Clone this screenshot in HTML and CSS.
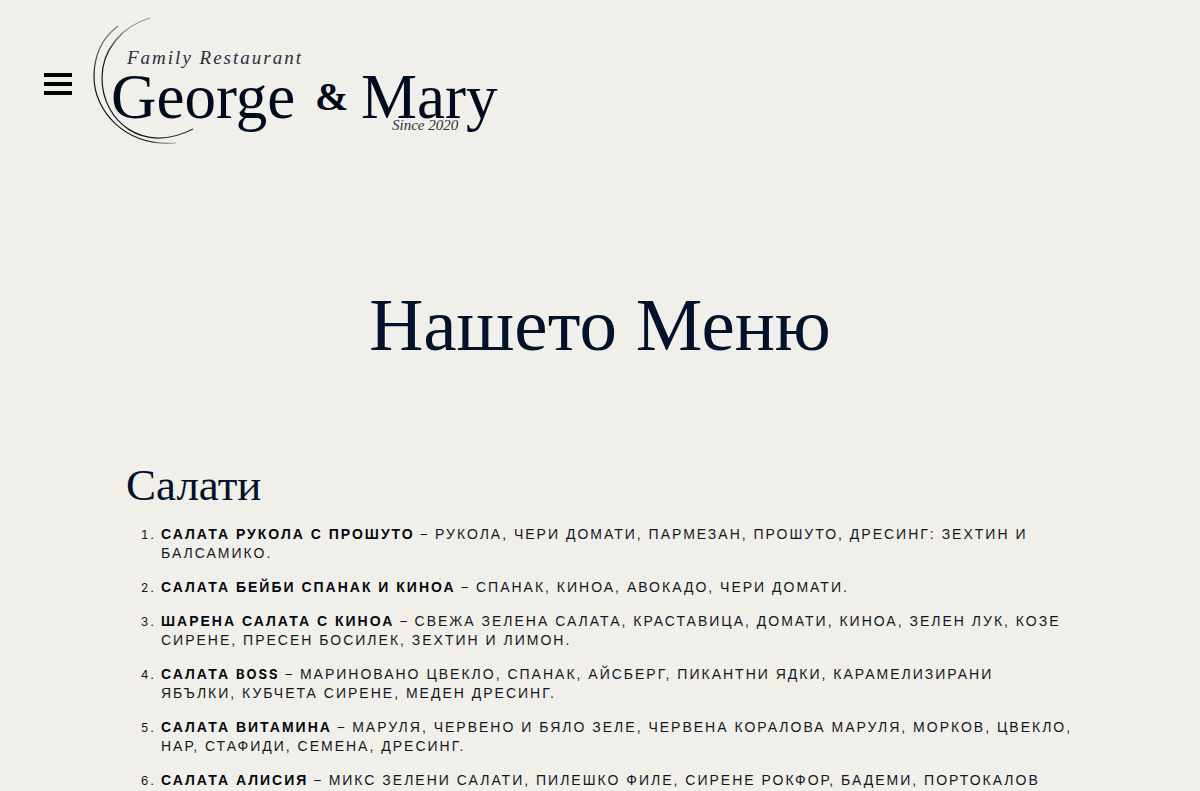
FILE: index.html
```html
<!DOCTYPE html>
<html lang="bg">
<head>
    <meta charset="UTF-8">
    <meta name="viewport" content="width=device-width, initial-scale=1.0">
    <title>George &amp; Mary</title>
    <link rel="stylesheet" href="styles.css">
</head>
<body>
    <!-- Header -->
    <header class="header">
        <button type="button" class="menu-button" aria-label="Меню">
            <span class="bar"></span>
            <span class="bar"></span>
            <span class="bar"></span>
        </button>
        <a href="#" class="logo">
            <svg width="440" height="136" viewBox="88 16 440 136">
                <defs>
                    <linearGradient id="fade-outer" gradientUnits="userSpaceOnUse" x1="94" y1="24" x2="176" y2="146">
                        <stop offset="0" stop-color="#12161f" stop-opacity="0.3"/>
                        <stop offset="0.3" stop-color="#12161f"/>
                        <stop offset="0.85" stop-color="#12161f"/>
                        <stop offset="1" stop-color="#12161f" stop-opacity="0.2"/>
                    </linearGradient>
                    <linearGradient id="fade-inner" gradientUnits="userSpaceOnUse" x1="160" y1="18" x2="194" y2="140">
                        <stop offset="0" stop-color="#12161f" stop-opacity="0.4"/>
                        <stop offset="0.15" stop-color="#12161f"/>
                        <stop offset="0.9" stop-color="#12161f"/>
                        <stop offset="1" stop-color="#12161f" stop-opacity="0.4"/>
                    </linearGradient>
                </defs>
                <path d="M118 26C102 38 94 56 94 77C94 110 124 147 176 143" fill="none" stroke="url(#fade-outer)" stroke-width="1.2"/>
                <path d="M150 18C122 26 102 50 102 78C102 121 143 155 193 129" fill="none" stroke="url(#fade-inner)" stroke-width="1.2"/>
                <text x="127" y="64" class="logo-tag">Family Restaurant</text>
                <text x="111" y="118" class="logo-name">George</text>
                <text x="315" y="110" class="logo-amp">&amp;</text>
                <text x="361" y="118" class="logo-name">Mary</text>
                <text x="392" y="130" class="logo-since">Since 2020</text>
            </svg>
        </a>
    </header>

    <!-- Menu -->
    <main class="container">
        <h1>Нашето Меню</h1>

        <section>
            <h2>Салати</h2>
            <ol class="menu-list">
                <li><strong>САЛАТА РУКОЛА С ПРОШУТО</strong> <span class="small">–</span> РУКОЛА, ЧЕРИ ДОМАТИ, ПАРМЕЗАН, ПРОШУТО, ДРЕСИНГ: ЗЕХТИН И БАЛСАМИКО.</li>
                <li><strong>САЛАТА БЕЙБИ СПАНАК И КИНОА</strong> <span class="small">–</span> СПАНАК, КИНОА, АВОКАДО, ЧЕРИ ДОМАТИ.</li>
                <li><strong>ШАРЕНА САЛАТА С КИНОА</strong> <span class="small">–</span> СВЕЖА ЗЕЛЕНА САЛАТА, КРАСТАВИЦА, ДОМАТИ, КИНОА, ЗЕЛЕН ЛУК, КОЗЕ СИРЕНЕ, ПРЕСЕН БОСИЛЕК, ЗЕХТИН И ЛИМОН.</li>
                <li><strong>САЛАТА <span class="small">BOSS</span></strong> <span class="small">–</span> МАРИНОВАНО ЦВЕКЛО, СПАНАК, АЙСБЕРГ, ПИКАНТНИ ЯДКИ, КАРАМЕЛИЗИРАНИ ЯБЪЛКИ, КУБЧЕТА СИРЕНЕ, МЕДЕН ДРЕСИНГ.</li>
                <li><strong>САЛАТА ВИТАМИНА</strong> <span class="small">–</span> МАРУЛЯ, ЧЕРВЕНО И БЯЛО ЗЕЛЕ, ЧЕРВЕНА КОРАЛОВА МАРУЛЯ, МОРКОВ, ЦВЕКЛО, НАР, СТАФИДИ, СЕМЕНА, ДРЕСИНГ.</li>
                <li><strong>САЛАТА АЛИСИЯ</strong> <span class="small">–</span> МИКС ЗЕЛЕНИ САЛАТИ, ПИЛЕШКО ФИЛЕ, СИРЕНЕ РОКФОР, БАДЕМИ, ПОРТОКАЛОВ</li>
            </ol>
        </section>
    </main>
</body>
</html>
```
FILE: styles.css
```css
* {
    box-sizing: border-box;
}

body {
    margin: 0;
    background-color: #f0efea;
    color: #14181c;
    font-family: "Liberation Sans", Arial, sans-serif;
    font-size: 14px;
    line-height: 19px;
}

/* Header */
.header {
    display: flex;
    align-items: center;
    gap: 16px;
    padding: 16px 44px 0;
}

.menu-button {
    display: flex;
    flex-direction: column;
    gap: 5px;
    width: 28px;
    padding: 0;
    border: none;
    background: none;
    cursor: pointer;
}

.bar {
    height: 4px;
    width: 100%;
    background-color: #000;
}

.logo svg {
    display: block;
}

.logo text {
    font-family: "Liberation Serif", "Times New Roman", serif;
    fill: #020a20;
}

.logo .logo-name {
    font-size: 63px;
}

.logo .logo-amp {
    font-size: 40px;
    font-weight: bold;
}

.logo .logo-tag {
    font-size: 19px;
    font-style: italic;
    letter-spacing: 2px;
    fill: #2a2f3a;
}

.logo .logo-since {
    font-size: 15px;
    font-style: italic;
    fill: #2a2f3a;
}

/* Menu */
.container {
    max-width: 1200px;
    margin: 0 auto;
    padding: 128px 126px 0;
}

h1,
h2 {
    font-family: "Liberation Serif", "Times New Roman", serif;
    font-weight: normal;
    color: #03122b;
    margin: 0;
}

h1 {
    font-size: 75px;
    line-height: 90px;
    text-align: center;
    margin-bottom: 91px;
}

h2 {
    font-size: 45px;
    line-height: 48px;
    margin-bottom: 16px;
}

.menu-list {
    margin: 0;
    padding-left: 35px;
    letter-spacing: 2px;
}

.menu-list li {
    margin-bottom: 15px;
}

.menu-list li::marker {
    font-family: Inter, sans-serif;
    font-size: 12px;
}

.menu-list strong {
    color: #05080c;
}

.small {
    font-family: Inter, sans-serif;
    font-size: 13px;
    line-height: 1;
}
```
